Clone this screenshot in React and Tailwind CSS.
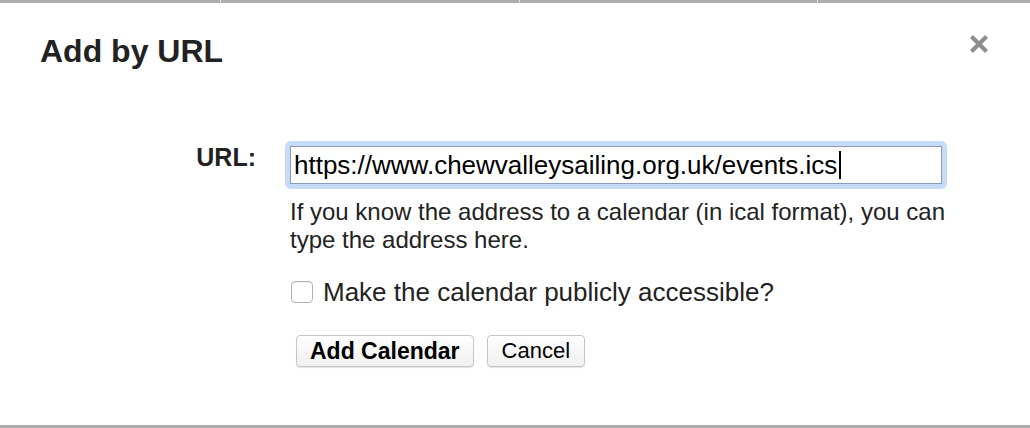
import React from "react";

export default function App() {
  return (
    <div className="w-[1030px] h-[428px] bg-white flex flex-col overflow-hidden font-['Liberation_Sans',Arial,sans-serif] text-[#222]">
      {/* top edge */}
      <div className="h-[3px] bg-[#ababab] flex">
        <div className="w-[221px] border-r border-[#dcdcdc]" />
        <div className="w-[299px] border-r border-[#dcdcdc]" />
        <div className="w-[298px] border-r border-[#dcdcdc]" />
        <div className="flex-1" />
      </div>

      {/* title row */}
      <div className="flex items-start justify-between pl-[40px] pr-[40px] pt-[30px]">
        <h1 className="text-[32px] leading-[36px] font-bold text-[#222]">Add by URL</h1>
        <button className="w-[22px] h-[22px] flex items-center justify-center" aria-label="Close">
          <svg width="22" height="22" viewBox="0 0 22 22">
            <path d="M3.5 3.5 L18.5 18.5 M18.5 3.5 L3.5 18.5" stroke="#8d8d8d" strokeWidth="4.2" strokeLinecap="butt" fill="none" />
          </svg>
        </button>
      </div>

      {/* form */}
      <div className="flex items-start mt-[72px]">
        <label className="w-[256px] text-right text-[25px] leading-[30px] font-bold pt-[1px]">URL:</label>
        <div className="ml-[34px] flex flex-col">
          <div className="-ml-[5px] p-[5px] rounded-[6px] bg-[#c6dbf7] w-[662px]">
            <div className="h-[38px] border border-[#8b9cba] bg-white flex items-center pl-[3px] text-[26px] text-black">
              <span>https://www.chewvalleysailing.org.uk/events.ics</span>
              <span className="w-[2px] h-[28px] bg-black ml-[2px]" />
            </div>
          </div>

          <p className="mt-[9px] w-[660px] text-[24px] leading-[28px] text-[#222]">
            If you know the address to a calendar (in ical format), you can type the address here.
          </p>

          <div className="mt-[23px] flex items-center h-[30px]">
            <span className="ml-[1px] w-[22px] h-[22px] rounded-[4px] border border-[#b3b3b3] bg-white shadow-[inset_0_1px_1px_rgba(0,0,0,0.06)]" />
            <span className="ml-[10px] text-[26px] leading-[30px] text-[#222]">Make the calendar publicly accessible?</span>
          </div>

          <div className="mt-[28px] ml-[6px] flex items-center gap-[13px]">
            <button className="h-[32px] px-[13px] rounded-[4px] border border-[#c6c6c6] bg-gradient-to-b from-white to-[#f0f0f0] shadow-[0_1px_1px_rgba(0,0,0,0.12)] text-[23px] leading-[30px] font-bold text-black">
              Add Calendar
            </button>
            <button className="h-[32px] px-[14px] rounded-[4px] border border-[#c6c6c6] bg-gradient-to-b from-white to-[#f0f0f0] shadow-[0_1px_1px_rgba(0,0,0,0.12)] text-[22px] leading-[30px] text-black">
              Cancel
            </button>
          </div>
        </div>
      </div>

      <div className="flex-1" />
      {/* bottom edge */}
      <div className="h-[3px] bg-[#ababab]" />
    </div>
  );
}
